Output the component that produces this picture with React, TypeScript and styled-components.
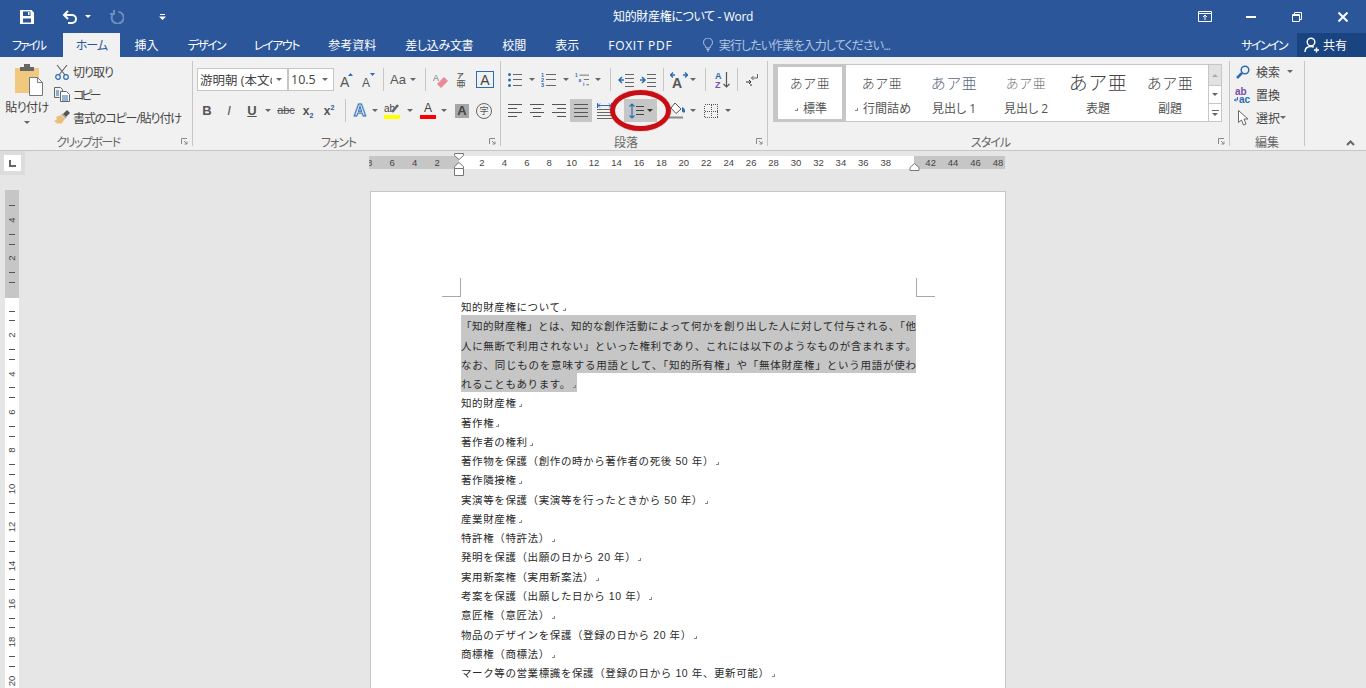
import React from 'react';
import styled, { createGlobalStyle } from 'styled-components';

const GlobalStyle = createGlobalStyle`
  html, body {
    margin: 0;
    padding: 0;
    background: #e6e6e6;
  }
  * {
    box-sizing: border-box;
  }
`;

const uiFont = `"Open Sans", "Noto Sans CJK JP", sans-serif`;
const docFont = `"Liberation Sans", "Noto Sans CJK JP", sans-serif`;

const Root = styled.div`
  width: 1366px;
  height: 688px;
  overflow: hidden;
  display: flex;
  flex-direction: column;
  font-family: ${uiFont};
  font-feature-settings: 'palt';
  color: #444;
`;

/* title bar */
const TitleBar = styled.div`
  height: 33px;
  flex: none;
  background: #2b579a;
  display: grid;
  grid-template-columns: 1fr auto 1fr;
  align-items: center;
`;

const Qat = styled.div`
  display: flex;
  align-items: center;
  padding-left: 8px;
`;

const QatBtn = styled.div<{ $w: number; $ml?: number }>`
  width: ${(p) => p.$w}px;
  margin-left: ${(p) => p.$ml ?? 0}px;
  display: flex;
  justify-content: center;
  align-items: center;
`;

const TitleText = styled.div`
  color: #fff;
  font-size: 12px;
  letter-spacing: -0.35px;
  margin-top: -1px;
`;

const WinControls = styled.div`
  display: flex;
  justify-content: flex-end;
`;

const WinBtn = styled.div`
  width: 46px;
  height: 32px;
  display: flex;
  justify-content: center;
  align-items: center;
`;

/* tabs */
const TabRow = styled.div`
  height: 24px;
  flex: none;
  background: #2b579a;
  display: flex;
  align-items: stretch;
  font-size: 12px;
  color: #fff;
`;

const Tab = styled.div<{ $active?: boolean; $ls?: number }>`
  padding: 0 ${(p) => (p.$active ? 13 : 14.5)}px;
  margin-left: ${(p) => (p.$active ? 3.5 : 0)}px;
  display: flex;
  align-items: center;
  letter-spacing: ${(p) => p.$ls ?? 0}px;
  background: ${(p) => (p.$active ? '#f1f1f1' : 'transparent')};
  color: ${(p) => (p.$active ? '#2b579a' : '#fff')};
  &:first-child {
    margin-left: -2.5px;
  }
`;

const TellMe = styled.div`
  display: flex;
  align-items: center;
  gap: 6px;
  margin-left: 16px;
  letter-spacing: -0.9px;
  color: #b3c5e0;
`;

const TabSpacer = styled.div`
  flex: 1;
`;

const SignIn = styled.div`
  display: flex;
  align-items: center;
  margin-right: 10px;
  letter-spacing: -1.6px;
`;

const ShareBox = styled.div`
  width: 69px;
  background: #1a4480;
  display: flex;
  align-items: center;
  gap: 3px;
  padding-left: 7px;
`;

/* ribbon */
const Ribbon = styled.div`
  height: 94px;
  flex: none;
  background: #f1f1f1;
  border-bottom: 1px solid #c6c6c6;
  display: flex;
  align-items: flex-start;
  padding-top: 4px;
`;

const Group = styled.div<{ $w: number }>`
  position: relative;
  width: ${(p) => p.$w}px;
  height: 85px;
  flex: none;
  border-right: 1px solid #c6c6c6;
  display: flex;
  flex-direction: column;
`;

const GroupBody = styled.div`
  flex: 1;
  min-height: 0;
`;

const GroupLabel = styled.div<{ $ls?: number; $plain?: boolean }>`
  height: 16px;
  margin-bottom: -5px;
  padding-right: ${(p) => (p.$plain ? 0 : 16)}px;
  text-align: center;
  font-size: 12px;
  line-height: 16px;
  letter-spacing: ${(p) => p.$ls ?? 0}px;
  color: #666;
`;

const Launcher = styled.svg`
  position: absolute;
  right: 4px;
  bottom: 1px;
`;

const ToolRow = styled.div<{ $ml?: number; $mt?: number }>`
  display: flex;
  align-items: center;
  height: 23px;
  margin-left: ${(p) => p.$ml ?? 0}px;
  margin-top: ${(p) => p.$mt ?? 0}px;
`;

const Btn = styled.div<{ $w: number; $on?: boolean; $ml?: number }>`
  width: ${(p) => p.$w}px;
  height: 23px;
  flex: none;
  margin-left: ${(p) => p.$ml ?? 0}px;
  display: flex;
  justify-content: center;
  align-items: center;
  background: ${(p) => (p.$on ? '#c6c6c6' : 'transparent')};
`;

const Caret = styled.span<{ $color?: string }>`
  width: 0;
  height: 0;
  border-left: 3px solid transparent;
  border-right: 3px solid transparent;
  border-top: 3px solid ${(p) => p.$color ?? '#666'};
`;

const Sep = styled.div<{ $l: number; $r: number }>`
  width: 1px;
  height: 23px;
  flex: none;
  background: #c6c6c6;
  margin: 0 ${(p) => p.$r}px 0 ${(p) => p.$l}px;
`;

const Glyph = styled.span<{ $size?: number; $bold?: boolean; $italic?: boolean; $under?: boolean; $strike?: boolean }>`
  font-family: 'Liberation Sans', sans-serif;
  font-size: ${(p) => p.$size ?? 13}px;
  font-weight: ${(p) => (p.$bold ? 700 : 400)};
  font-style: ${(p) => (p.$italic ? 'italic' : 'normal')};
  text-decoration: ${(p) => (p.$under ? 'underline' : p.$strike ? 'line-through' : 'none')};
  color: #555;
  line-height: 1;
  sub, sup {
    font-size: 7px;
    color: #2b579a;
    line-height: 0;
  }
`;

const OutlineA = styled(Glyph)`
  color: #fff;
  -webkit-text-stroke: 1px #2b6cb5;
  font-weight: 700;
  font-size: 17px;
  text-shadow: 0 0 2px #9cc3ea;
`;

const BoxedA = styled(Glyph)`
  width: 18px;
  height: 17px;
  border: 1px solid #2b6cb5;
  display: flex;
  align-items: center;
  justify-content: center;
  color: #444;
`;

const ShadedA = styled(Glyph)`
  width: 14px;
  height: 14px;
  background: #a6a6a6;
  display: flex;
  align-items: center;
  justify-content: center;
  color: #444;
  font-weight: 700;
`;

const CircledChar = styled.span`
  width: 16px;
  height: 16px;
  border: 1px solid #666;
  border-radius: 50%;
  font-size: 9px;
  display: flex;
  align-items: center;
  justify-content: center;
  color: #555;
`;

const BarGlyph = styled.span<{ $bar: string }>`
  width: 16px;
  display: flex;
  flex-direction: column;
  align-items: center;
  font-family: 'Liberation Sans', sans-serif;
  font-size: 12px;
  line-height: 13px;
  color: #444;
  border-bottom: 4px solid ${(p) => p.$bar};
`;

const SelectBox = styled.div<{ $w: number }>`
  width: ${(p) => p.$w}px;
  height: 23px;
  flex: none;
  background: #fff;
  border: 1px solid #c6c6c6;
  display: flex;
  align-items: center;
  font-size: 12.5px;
  color: #444;
  padding: 0 5px 0 2px;
`;

const SelectText = styled.span`
  flex: 1;
  min-width: 0;
  overflow: hidden;
  white-space: nowrap;
  margin-right: 4px;
`;

/* clipboard */
const ClipLayout = styled.div`
  display: flex;
`;

const PasteCol = styled.div`
  width: 50px;
  margin: 3px 2px 0 2px;
  display: flex;
  flex-direction: column;
  align-items: center;
  font-size: 12px;
  line-height: 16px;
  letter-spacing: -0.5px;
  svg {
    margin: 0 0 4px 4px;
  }
`;

const PasteCaret = styled(Caret)`
  margin-top: 5px;
`;

const CmdList = styled.div`
  margin-top: -1px;
`;

const CmdRow = styled.div<{ $ls?: number }>`
  display: flex;
  align-items: center;
  height: 23px;
  font-size: 12px;
  letter-spacing: ${(p) => p.$ls ?? 0}px;
  white-space: nowrap;
`;

const CmdIcon = styled.span<{ $w: number; $mr?: number }>`
  width: ${(p) => p.$w}px;
  margin-right: ${(p) => p.$mr ?? 0}px;
  flex: none;
  display: flex;
  justify-content: center;
`;

const CmdCaret = styled(Caret)`
  margin-left: 7px;
`;

/* styles gallery */
const Gallery = styled.div`
  width: 449px;
  height: 58px;
  margin: 3px 0 0 5px;
  background: #fff;
  border: 1px solid #c6c6c6;
  display: flex;
`;

const StyleItem = styled.div<{ $selected?: boolean }>`
  width: 72px;
  height: 100%;
  flex: none;
  display: flex;
  flex-direction: column;
  align-items: center;
  border: ${(p) => (p.$selected ? '4px solid #c6c6c6' : '4px solid transparent')};
  border-top-width: 2px;
  border-bottom-width: 2px;
`;

const StylePreview = styled.div<{ $size: number; $color: string }>`
  height: 32px;
  display: flex;
  align-items: center;
  font-size: ${(p) => p.$size}px;
  color: ${(p) => p.$color};
  letter-spacing: 0.5px;
  white-space: nowrap;
  font-feature-settings: normal;
  font-weight: 300;
`;

const StyleName = styled.div`
  font-size: 12px;
  line-height: 20px;
  margin-top: 2px;
  color: #555;
  white-space: nowrap;
  display: flex;
  align-items: center;
  gap: 4px;
`;

const ScrollCol = styled.div`
  width: 14px;
  margin-left: 2px;
  border-left: 1px solid #c6c6c6;
  display: flex;
  flex-direction: column;
`;

const ScrollBtn = styled.div<{ $h: number; $off?: boolean }>`
  height: ${(p) => p.$h}px;
  background: ${(p) => (p.$off ? '#e2e2e2' : '#fff')};
  border-bottom: 1px solid #c6c6c6;
  display: flex;
  align-items: center;
  justify-content: center;
  &:last-child {
    border-bottom: 0;
  }
`;

const UpCaret = styled.span`
  width: 0;
  height: 0;
  border-left: 3px solid transparent;
  border-right: 3px solid transparent;
  border-bottom: 3px solid #aaa;
`;

const MoreCaret = styled.span`
  width: 7px;
  border-top: 1px solid #666;
  padding-top: 2px;
  display: flex;
  justify-content: center;
`;

const Collapse = styled.div`
  flex: 1;
  height: 85px;
  display: flex;
  justify-content: flex-end;
  align-items: flex-end;
  padding: 0 11px 0 0;
`;

/* workspace */
const Workspace = styled.div`
  flex: 1;
  min-height: 0;
  display: flex;
  background: #e6e6e6;
`;

const LeftRail = styled.div`
  width: 25px;
  flex: none;
`;

const TabStop = styled.div`
  width: 25px;
  height: 24px;
  background: #dcdcdc;
  padding: 4px;
`;

const TabStopInner = styled.div`
  width: 17px;
  height: 16px;
  background: #fff;
  display: flex;
  align-items: center;
  justify-content: center;
`;

const VRuler = styled.div`
  width: 14px;
  height: 500px;
  margin: 15px 0 0 5px;
  padding-top: 10.8px;
  background: linear-gradient(#c6c6c6 108px, #fff 108px);
  overflow: hidden;
`;

const VCell = styled.div`
  height: 38.4px;
  display: flex;
  flex-direction: column;
  justify-content: space-around;
  align-items: center;
`;

const VTick = styled.div`
  width: 6px;
  height: 1px;
  background: #555;
`;

const VNum = styled.div`
  height: 10px;
  line-height: 10px;
  font-family: 'Liberation Sans', sans-serif;
  font-size: 9.5px;
  color: #444;
  transform: rotate(-90deg);
`;

const Main = styled.div`
  flex: 1;
  min-width: 0;
  padding: 5px 0 0 344px;
`;

const HRulerWrap = styled.div`
  position: relative;
  width: 636px;
`;

const HRuler = styled.div`
  width: 636px;
  height: 13px;
  background: linear-gradient(to right, #c6c6c6 90px, #fff 90px, #fff 545px, #c6c6c6 545px);
  display: flex;
  overflow: hidden;
`;

const HCells = styled.div`
  display: flex;
  flex: none;
  margin-left: -10.5px;
`;

const HCell = styled.div`
  width: 22.45px;
  flex: none;
  text-align: center;
  font-family: 'Liberation Sans', sans-serif;
  font-size: 9.5px;
  line-height: 13px;
  color: #444;
`;

const IndentMarker = styled.svg`
  position: absolute;
  left: 85px;
  top: -3px;
`;

const RightMarker = styled.svg`
  position: absolute;
  left: 540px;
  top: 7px;
`;

const Page = styled.div`
  position: relative;
  width: 636px;
  height: 520px;
  margin: 22px 0 0 1px;
  background: #fff;
  border: 1px solid #c6c6c6;
  padding: 104px 0 0 90px;
`;

const CropMark = styled.div<{ $right?: boolean }>`
  position: absolute;
  top: 86px;
  left: ${(p) => (p.$right ? '545px' : '71px')};
  width: 19px;
  height: 19px;
  border-bottom: 1px solid #a8a8a8;
  border-right: ${(p) => (p.$right ? '0' : '1px solid #a8a8a8')};
  border-left: ${(p) => (p.$right ? '1px solid #a8a8a8' : '0')};
`;

const DocLine = styled.div<{ $selected?: boolean; $fill?: boolean }>`
  width: ${(p) => (p.$fill ? '455px' : 'fit-content')};
  height: 19.27px;
  padding-top: 3px;
  line-height: 16.27px;
  font-family: ${docFont};
  font-feature-settings: normal;
  font-size: 10.5px;
  letter-spacing: ${(p) => (p.$fill ? '0' : '0.6px')};
  color: #2a2a2a;
  white-space: nowrap;
  background: ${(p) => (p.$selected ? '#c6c6c6' : 'transparent')};
  text-align: ${(p) => (p.$fill ? 'justify' : 'left')};
  text-align-last: ${(p) => (p.$fill ? 'justify' : 'auto')};
  text-justify: inter-character;
`;

const ParaMark = styled.span`
  display: inline-block;
  width: 3px;
  height: 3px;
  margin: 0 1px 0 2px;
  border-right: 1px solid #888;
  border-bottom: 1px solid #888;
`;

/* red annotation, sits over the line spacing button */
const SpacingBtn = styled(Btn)`
  position: relative;
  gap: 3px;
`;

const RedRing = styled.div`
  position: absolute;
  left: -14px;
  top: -9px;
  width: 61px;
  height: 41px;
  border: 5px solid #c80d14;
  border-radius: 50%;
  box-shadow: 0 0 1px #c80d14;
`;

/* icons */
const Ico = ({ w = 16, h = 16, stroke = '#666', children }: { w?: number; h?: number; stroke?: string; children: React.ReactNode }) => (
  <svg width={w} height={h} viewBox={`0 0 ${w} ${h}`} fill="none" stroke={stroke} strokeWidth="1">
    {children}
  </svg>
);

const SaveIcon = () => (
  <Ico w={14} h={14} stroke="none">
    <path fillRule="evenodd" fill="#fff" d="M0 0h11.5L14 2.5V14H0zM3 1.5V6h7.5V1.5zM3 8.5V12.500h8V8.500z" />
    <path fill="#fff" d="M8 2h1.500v3H8z" />
  </Ico>
);

const UndoIcon = () => (
  <Ico w={16} h={14} stroke="#fff">
    <path strokeWidth="2" d="M6 1 2 5l4 4M2 5h8a4 4 0 0 1 0 8H6" />
  </Ico>
);

const RedoIcon = () => (
  <Ico w={14} h={14} stroke="#6f8ebc">
    <path strokeWidth="2" d="M4.500 2.500a6 6 0 1 0 4-.8M4 0v4h-4" />
  </Ico>
);

const CustomizeIcon = () => (
  <Ico w={7} h={6} stroke="none">
    <path fill="#fff" d="M1 0h5v1H1zM0 2.500h7L3.500 6z" />
  </Ico>
);

const DisplayIcon = () => (
  <Ico w={14} h={11} stroke="#fff">
    <path d="M.5.500h13v10H.500zM.5 2.500h13M7 9V4M5 6l2-2 2 2" />
  </Ico>
);

const MinIcon = () => (
  <Ico w={10} h={4} stroke="#fff">
    <path strokeWidth="2" d="M0 2h10" />
  </Ico>
);

const RestoreIcon = () => (
  <Ico w={10} h={10} stroke="#fff">
    <path d="M.500 2.500h7v7h-7zM2.500 2.500v-2h7v7h-2" />
    <path d="M.500 3.500h7" />
  </Ico>
);

const CloseIcon = () => (
  <Ico w={10} h={10} stroke="#fff">
    <path strokeWidth="2" d="M.5.500l9 9M9.500.500l-9 9" />
  </Ico>
);

const BulbIcon = () => (
  <Ico w={10} h={14} stroke="#b3c5e0">
    <path d="M3 10c0-2-2.500-3-2.500-5.500a4.500 4.500 0 0 1 9 0C9.500 7 7 8 7 10zM3.500 11.500h3M4 13h2" />
  </Ico>
);

const UserIcon = () => (
  <Ico w={16} h={16} stroke="#fff">
    <circle cx="7" cy="5" r="3.800" strokeWidth="1.400" />
    <path strokeWidth="1.400" d="M1 15c0-3.500 2.500-5.500 6-5.500 1 0 2 .2 2.800.6M12.500 10.500v5M10 13h5" />
  </Ico>
);

const PasteIcon = () => (
  <Ico w={30} h={32} stroke="none">
    <path fill="#f0c97f" d="M1 4h24v25H1z" />
    <path fill="#666" d="M6 3h4V0h6v3h4v4H6z" />
    <path fill="#fff" stroke="#777" d="M15.500 13.500h8l5 5v13h-13z" />
    <path stroke="#777" d="M23.500 13.500v5h5" />
  </Ico>
);

const ScissorsIcon = () => (
  <Ico w={14} h={16} stroke="#666">
    <path d="M2 1l8 10M12 1 4 11" strokeWidth="1.200" />
    <circle cx="3" cy="13" r="2.300" stroke="#2b6cb5" strokeWidth="1.200" />
    <circle cx="11" cy="13" r="2.300" stroke="#2b6cb5" strokeWidth="1.200" />
  </Ico>
);

const CopyIcon = () => (
  <Ico w={16} h={15} stroke="#666">
    <path d="M.5.500h6l2 2v2M.5.500v10h5" />
    <path fill="#fff" d="M6.500 4.500h6l3 3v7h-9z" />
    <path stroke="#2b6cb5" d="M2 4h3M2 6h3M2 8h3M8 9h6M8 11h6M8 13h6" />
  </Ico>
);

const BrushIcon = () => (
  <Ico w={16} h={15} stroke="none">
    <path fill="#555" d="M9 4l4-4 3 3-4 4z" />
    <path fill="#999" d="M7.500 4.500 8.500 3.500l4 4-1 1z" />
    <path fill="#e9bf7a" d="M7 5l4 4-4 5-2-1-1 1-4-3 2-1 1-1-1-2z" />
  </Ico>
);

const GrowA = ({ up }: { up: boolean }) => (
  <Ico w={14} h={16} stroke="none">
    <text x="0" y="15" fontFamily="Liberation Sans" fontSize={up ? 14 : 12} fill="#555">A</text>
    <path fill="#2b6cb5" d={up ? 'M8 4h5l-2.500-3z' : 'M8 1h5l-2.500 3z'} />
  </Ico>
);

const EraserIcon = () => (
  <Ico w={16} h={16} stroke="none">
    <text x="0" y="9" fontFamily="Liberation Sans" fontSize="9" fill="#777">A</text>
    <path fill="#e9899a" d="M4 12l7-7 4 4-7 7z" />
  </Ico>
);

const RubyIcon = () => (
  <Ico w={12} h={16} stroke="none">
    <text x="1" y="6" fontFamily="Noto Sans CJK JP" fontSize="7" fontWeight="700" fill="#555">ア</text>
    <text x="0" y="16" fontFamily="Noto Sans CJK JP" fontSize="10" fill="#555">亜</text>
  </Ico>
);

const HighlightIcon = () => (
  <Ico w={16} h={17} stroke="none">
    <text x="0" y="10" fontFamily="Liberation Sans" fontSize="10" fill="#444">ab</text>
    <path stroke="#666" strokeWidth="2.500" d="M8 10l6-7" />
    <path fill="#ffff00" d="M0 13h16v4H0z" />
  </Ico>
);

const ListLines = ({ x, ys, to = 14 }: { x: number; ys: number[]; to?: number }) => (
  <path stroke="#666" d={ys.map((y) => `M${x} ${y + 0.5}H${to}`).join('')} />
);

const BulletIcon = () => (
  <Ico w={14} h={14}>
    <circle cx="1.500" cy="1.500" r="1.500" fill="#2b6cb5" stroke="none" />
    <circle cx="1.500" cy="7" r="1.500" fill="#2b6cb5" stroke="none" />
    <circle cx="1.500" cy="12.500" r="1.500" fill="#2b6cb5" stroke="none" />
    <ListLines x={5} ys={[1, 6, 12]} />
  </Ico>
);

const NumberIcon = () => (
  <Ico w={15} h={15}>
    <text x="0" y="5" fontFamily="Liberation Sans" fontSize="5.500" fontWeight="700" fill="#2b6cb5" stroke="none">1</text>
    <text x="0" y="10" fontFamily="Liberation Sans" fontSize="5.500" fontWeight="700" fill="#2b6cb5" stroke="none">2</text>
    <text x="0" y="15" fontFamily="Liberation Sans" fontSize="5.500" fontWeight="700" fill="#2b6cb5" stroke="none">3</text>
    <ListLines x={5} ys={[2, 7, 13]} to={15} />
  </Ico>
);

const MultiIcon = () => (
  <Ico w={16} h={15}>
    <text x="0" y="5" fontFamily="Liberation Sans" fontSize="5.500" fontWeight="700" fill="#2b6cb5" stroke="none">1</text>
    <text x="4" y="10" fontFamily="Liberation Sans" fontSize="5.500" fontWeight="700" fill="#2b6cb5" stroke="none">a</text>
    <text x="9" y="15" fontFamily="Liberation Sans" fontSize="5.500" fontWeight="700" fill="#2b6cb5" stroke="none">i</text>
    <path stroke="#666" d="M5 2.500h11M10 7.500h6M13 13.500h3" />
  </Ico>
);

const IndentIcon = ({ dir }: { dir: 'in' | 'out' }) => (
  <Ico w={16} h={14}>
    <ListLines x={7} ys={[1, 5, 9, 13]} to={16} />
    <path stroke="#2b6cb5" strokeWidth="1.500" d={dir === 'out' ? 'M6 7H1.500M4 4 1 7l3 3' : 'M0 7h4.500M2 4l3 3-3 3'} />
  </Ico>
);

const AsianIcon = () => (
  <Ico w={18} h={16}>
    <text x="2" y="16" fontFamily="Liberation Sans" fontSize="14" fontWeight="700" fill="#555" stroke="none">A</text>
    <path stroke="#2b6cb5" strokeWidth="1.300" d="M0 3h5M3 .5 .5 3 3 5.500M18 3h-5M15 .5 17.500 3 15 5.500" />
  </Ico>
);

const SortIcon = () => (
  <Ico w={15} h={17} stroke="none">
    <text x="0" y="8" fontFamily="Liberation Sans" fontSize="9" fontWeight="700" fill="#2b6cb5">A</text>
    <text x="0" y="17" fontFamily="Liberation Sans" fontSize="9" fontWeight="700" fill="#7a4ea8">Z</text>
    <path stroke="#555" strokeWidth="1.200" d="M11.500 1v15M8.500 13l3 3 3-3" />
  </Ico>
);

const MarksIcon = () => (
  <Ico w={12} h={13}>
    <path d="M11.500 1v4h-6M7.500 3l-2 2 2 2" />
    <path stroke="#333" d="M0 9h5M3 7l2 2-2 2M4 12h2" />
  </Ico>
);

const AlignIcon = ({ kind }: { kind: 'left' | 'center' | 'right' | 'full' }) => {
  const d = {
    left: 'M0 .5h14M0 4.500h9M0 8.500h14M0 12.500h9',
    center: 'M0 .5h14M3 4.500h8M0 8.500h14M3 12.500h8',
    right: 'M0 .5h14M5 4.500h9M0 8.500h14M5 12.500h9',
    full: 'M0 .5h14M0 4.500h14M0 8.500h14M0 12.500h14',
  }[kind];
  return (
    <Ico w={14} h={13}>
      <path stroke="#555" d={d} />
    </Ico>
  );
};

const DistIcon = () => (
  <Ico w={15} h={16}>
    <path stroke="#2b6cb5" d="M.5 0v5M14.500 0v5M1 2.500h13M3 .5 1 2.500l2 2M12 .5l2 2-2 2" />
    <ListLines x={0} ys={[6, 9, 12, 15]} to={15} />
  </Ico>
);

const SpacingIcon = () => (
  <Ico w={15} h={16}>
    <path stroke="#2b6cb5" strokeWidth="1.200" d="M3 1v14M.5 3.500 3 1l2.500 2.500M.5 12.500 3 15l2.500-2.500" />
    <path stroke="#444" d="M7 3.500h8M7 7.500h8M7 11.500h8" />
  </Ico>
);

const ShadingIcon = () => (
  <Ico w={17} h={17}>
    <path fill="#fff" stroke="#555" d="M6 1l6 6-5 4.500L2 6z" />
    <path fill="#2b6cb5" stroke="none" d="M13 5c2 1 3.500 2.500 3 5-1 1-3 .5-3-1z" />
    <path stroke="#888" strokeWidth="2" d="M0 15.500h14" />
  </Ico>
);

const BorderIcon = () => (
  <svg width="14" height="14" viewBox="0 0 14 14" fill="none" shapeRendering="crispEdges">
    <path stroke="#555" strokeDasharray="1 1" d="M.5.500h13v13H.5zM.5 7h13M7 .5v13" />
  </svg>
);

const LauncherIcon = () => (
  <Launcher width="7" height="7" viewBox="0 0 7 7" fill="none" stroke="#888">
    <path d="M.5 6V.5H6M3 3l3 3M6 3.500V6H3.500" />
  </Launcher>
);

const SearchIcon = () => (
  <Ico w={14} h={14} stroke="#2b6cb5">
    <circle cx="9" cy="5" r="3.800" strokeWidth="1.500" />
    <path strokeWidth="2.500" d="M6 8 1 13" />
  </Ico>
);

const ReplaceIcon = () => (
  <Ico w={18} h={16} stroke="none">
    <text x="1" y="8" fontFamily="Liberation Sans" fontSize="10" fontWeight="700" fill="#7a4ea8">ab</text>
    <text x="5" y="16" fontFamily="Liberation Sans" fontSize="10" fontWeight="700" fill="#2b6cb5">ac</text>
    <path stroke="#2b6cb5" d="M3.500 10v3h-3M2 11.500.5 13 2 14.500" />
  </Ico>
);

const PointerIcon = () => (
  <Ico w={11} h={16} stroke="#666">
    <path fill="#fff" d="M.5.500v12l3-2.500 2 5 2.500-1-2-5h4z" />
  </Ico>
);

const ChevronUp = () => (
  <Ico w={9} h={6} stroke="#666">
    <path strokeWidth="2" d="M1 5l3.500-3.500L8 5" />
  </Ico>
);

const TabStopIcon = () => (
  <Ico w={7} h={7} stroke="#666">
    <path strokeWidth="2" d="M1 0v6h6" />
  </Ico>
);

const tabs = [
  { name: '挿入' },
  { name: 'デザイン', ls: -1.7 },
  { name: 'レイアウト', ls: -1.4 },
  { name: '参考資料' },
  { name: '差し込み文書', ls: -0.3 },
  { name: '校閲' },
  { name: '表示' },
  { name: 'FOXIT PDF', ls: 0.7 },
];
const rulerNums = [8, 6, 4, 2, 0, 2, 4, 6, 8, 10, 12, 14, 16, 18, 20, 22, 24, 26, 28, 30, 32, 34, 36, 38, 0, 42, 44, 46, 48];
const vRulerNums = [4, 2, 0, 2, 4, 6, 8, 10, 12, 14, 16, 18, 20];

const styleItems = [
  { name: '標準', size: 13, color: '#444', mark: true },
  { name: '行間詰め', size: 13, color: '#444', mark: true },
  { name: '見出し 1', size: 15, color: '#5a6a80' },
  { name: '見出し 2', size: 13, color: '#777' },
  { name: '表題', size: 19, color: '#444' },
  { name: '副題', size: 15, color: '#444' },
];

const selectedLines = [
  '「知的財産権」とは、知的な創作活動によって何かを創り出した人に対して付与される、「他',
  '人に無断で利用されない」といった権利であり、これには以下のようなものが含まれます。',
  'なお、同じものを意味する用語として、「知的所有権」や「無体財産権」という用語が使わ',
];

const bodyLines = [
  '知的財産権',
  '著作権',
  '著作者の権利',
  '著作物を保護（創作の時から著作者の死後 50 年）',
  '著作隣接権',
  '実演等を保護（実演等を行ったときから 50 年）',
  '産業財産権',
  '特許権（特許法）',
  '発明を保護（出願の日から 20 年）',
  '実用新案権（実用新案法）',
  '考案を保護（出願した日から 10 年）',
  '意匠権（意匠法）',
  '物品のデザインを保護（登録の日から 20 年）',
  '商標権（商標法）',
  'マーク等の営業標識を保護（登録の日から 10 年、更新可能）',
];

const App = () => (
  <Root>
    <GlobalStyle />
    <TitleBar>
      <Qat>
        <QatBtn $w={38}><SaveIcon /></QatBtn>
        <QatBtn $w={30} $ml={9}><UndoIcon /></QatBtn>
        <QatBtn $w={6}><Caret $color="#fff" /></QatBtn>
        <QatBtn $w={26} $ml={13}><RedoIcon /></QatBtn>
        <QatBtn $w={16} $ml={24}><CustomizeIcon /></QatBtn>
      </Qat>
      <TitleText>知的財産権について - Word</TitleText>
      <WinControls>
        <WinBtn><DisplayIcon /></WinBtn>
        <WinBtn><MinIcon /></WinBtn>
        <WinBtn><RestoreIcon /></WinBtn>
        <WinBtn><CloseIcon /></WinBtn>
      </WinControls>
    </TitleBar>

    <TabRow>
      <Tab $ls={-2.2}>ファイル</Tab>
      <Tab $active $ls={-1}>ホーム</Tab>
      {tabs.map((t) => (
        <Tab key={t.name} $ls={t.ls}>{t.name}</Tab>
      ))}
      <TellMe>
        <BulbIcon />
        実行したい作業を入力してください...
      </TellMe>
      <TabSpacer />
      <SignIn>サインイン</SignIn>
      <ShareBox>
        <UserIcon />
        共有
      </ShareBox>
    </TabRow>

    <Ribbon>
      <Group $w={193}>
        <GroupBody>
          <ClipLayout>
            <PasteCol>
              <PasteIcon />
              貼り付け
              <PasteCaret />
            </PasteCol>
            <CmdList>
              <CmdRow $ls={-1}><CmdIcon $w={16} $mr={3}><ScissorsIcon /></CmdIcon>切り取り</CmdRow>
              <CmdRow $ls={-3}><CmdIcon $w={16} $mr={3}><CopyIcon /></CmdIcon>コピー</CmdRow>
              <CmdRow $ls={-1.1}><CmdIcon $w={16} $mr={3}><BrushIcon /></CmdIcon>書式のコピー/貼り付け</CmdRow>
            </CmdList>
          </ClipLayout>
        </GroupBody>
        <GroupLabel $ls={-1.5}>クリップボード</GroupLabel>
        <LauncherIcon />
      </Group>

      <Group $w={308}>
        <GroupBody>
          <ToolRow $ml={4} $mt={7}>
            <SelectBox $w={91}>
              <SelectText>游明朝 (本文の</SelectText>
              <Caret />
            </SelectBox>
            <SelectBox $w={46}>
              <SelectText>10.5</SelectText>
              <Caret />
            </SelectBox>
            <Btn $w={22} $ml={2}><GrowA up /></Btn>
            <Btn $w={22}><GrowA up={false} /></Btn>
            <Sep $l={3} $r={3} />
            <Btn $w={22}><Glyph $size={13}>Aa</Glyph></Btn>
            <Btn $w={8}><Caret /></Btn>
            <Sep $l={8} $r={5} />
            <Btn $w={20}><EraserIcon /></Btn>
            <Btn $w={22}><RubyIcon /></Btn>
            <Btn $w={24}><BoxedA $size={14}>A</BoxedA></Btn>
          </ToolRow>
          <ToolRow $ml={4} $mt={8}>
            <Btn $w={20}><Glyph $bold>B</Glyph></Btn>
            <Btn $w={24}><Glyph $italic>I</Glyph></Btn>
            <Btn $w={22}><Glyph $bold $under>U</Glyph></Btn>
            <Btn $w={10}><Caret /></Btn>
            <Btn $w={26}><Glyph $size={11} $strike>abc</Glyph></Btn>
            <Btn $w={18}><Glyph $size={12} $bold>x<sub>2</sub></Glyph></Btn>
            <Btn $w={24}><Glyph $size={12} $bold>x<sup>2</sup></Glyph></Btn>
            <Sep $l={4} $r={4} />
            <Btn $w={20}><OutlineA>A</OutlineA></Btn>
            <Btn $w={10}><Caret /></Btn>
            <Btn $w={24}><HighlightIcon /></Btn>
            <Btn $w={12}><Caret /></Btn>
            <Btn $w={24}><BarGlyph $bar="#ff0000">A</BarGlyph></Btn>
            <Btn $w={8}><Caret /></Btn>
            <Btn $w={28}><ShadedA>A</ShadedA></Btn>
            <Btn $w={16}><CircledChar>字</CircledChar></Btn>
          </ToolRow>
        </GroupBody>
        <GroupLabel $ls={-1}>フォント</GroupLabel>
        <LauncherIcon />
      </Group>

      <Group $w={267}>
        <GroupBody>
          <ToolRow $ml={4} $mt={7}>
            <Btn $w={20}><BulletIcon /></Btn>
            <Btn $w={14}><Caret /></Btn>
            <Btn $w={18}><NumberIcon /></Btn>
            <Btn $w={18}><Caret /></Btn>
            <Btn $w={14}><MultiIcon /></Btn>
            <Btn $w={18}><Caret /></Btn>
            <Sep $l={3} $r={4} />
            <Btn $w={22}><IndentIcon dir="out" /></Btn>
            <Btn $w={22}><IndentIcon dir="in" /></Btn>
            <Sep $l={4} $r={4} />
            <Btn $w={22}><AsianIcon /></Btn>
            <Btn $w={6}><Caret /></Btn>
            <Sep $l={9} $r={4} />
            <Btn $w={24}><SortIcon /></Btn>
            <Sep $l={3} $r={4} />
            <Btn $w={20}><MarksIcon /></Btn>
          </ToolRow>
          <ToolRow $ml={3} $mt={8}>
            <Btn $w={22}><AlignIcon kind="left" /></Btn>
            <Btn $w={22}><AlignIcon kind="center" /></Btn>
            <Btn $w={22}><AlignIcon kind="right" /></Btn>
            <Btn $w={22} $on><AlignIcon kind="full" /></Btn>
            <Btn $w={24}><DistIcon /></Btn>
            <SpacingBtn $w={33} $ml={8} $on>
              <SpacingIcon />
              <Caret $color="#333" />
              <RedRing />
            </SpacingBtn>
            <Btn $w={20} $ml={10}><ShadingIcon /></Btn>
            <Btn $w={12}><Caret /></Btn>
            <Btn $w={24}><BorderIcon /></Btn>
            <Btn $w={10}><Caret /></Btn>
          </ToolRow>
        </GroupBody>
        <GroupLabel>段落</GroupLabel>
        <LauncherIcon />
      </Group>

      <Group $w={462}>
        <GroupBody>
          <Gallery>
            {styleItems.map((s, i) => (
              <StyleItem key={s.name} $selected={i === 0}>
                <StylePreview $size={s.size} $color={s.color}>あア亜</StylePreview>
                <StyleName>
                  {s.mark && <ParaMark />}
                  {s.name}
                </StyleName>
              </StyleItem>
            ))}
            <ScrollCol>
              <ScrollBtn $h={21} $off><UpCaret /></ScrollBtn>
              <ScrollBtn $h={18}><Caret /></ScrollBtn>
              <ScrollBtn $h={17}><MoreCaret><Caret /></MoreCaret></ScrollBtn>
            </ScrollCol>
          </Gallery>
        </GroupBody>
        <GroupLabel $ls={-1}>スタイル</GroupLabel>
        <LauncherIcon />
      </Group>

      <Group $w={75}>
        <GroupBody>
          <CmdList>
            <CmdRow><CmdIcon $w={26}><SearchIcon /></CmdIcon>検索<CmdCaret /></CmdRow>
            <CmdRow><CmdIcon $w={26}><ReplaceIcon /></CmdIcon>置換</CmdRow>
            <CmdRow><CmdIcon $w={26}><PointerIcon /></CmdIcon>選択<Caret /></CmdRow>
          </CmdList>
        </GroupBody>
        <GroupLabel $plain>編集</GroupLabel>
      </Group>

      <Collapse><ChevronUp /></Collapse>
    </Ribbon>

    <Workspace>
      <LeftRail>
        <TabStop>
          <TabStopInner><TabStopIcon /></TabStopInner>
        </TabStop>
        <VRuler>
          {vRulerNums.map((n, i) => (
            <VCell key={i}>
              <VTick />
              <VNum>{n > 0 ? n : ''}</VNum>
              <VTick />
            </VCell>
          ))}
        </VRuler>
      </LeftRail>

      <Main>
        <HRulerWrap>
          <HRuler>
            <HCells>
              {rulerNums.map((n, i) => (
                <HCell key={i}>{n > 0 ? n : ''}</HCell>
              ))}
            </HCells>
          </HRuler>
          <IndentMarker width="11" height="26" viewBox="0 0 11 26" fill="#fff" stroke="#777">
            <path d="M.5.500h9v2l-4.500 4-4.500-4z" />
            <path d="M5 9.500l4.500 4v2h-9v-2z" />
            <path d="M.5 15.500h9v7h-9z" />
          </IndentMarker>
          <RightMarker width="11" height="8" viewBox="0 0 11 8" fill="#fff" stroke="#777">
            <path d="M5.500.500l4.500 4v3H1v-3z" />
          </RightMarker>
        </HRulerWrap>

        <Page>
          <CropMark />
          <CropMark $right />
          <DocLine>知的財産権について<ParaMark /></DocLine>
          {selectedLines.map((l) => (
            <DocLine key={l} $selected $fill>{l}</DocLine>
          ))}
          <DocLine $selected>れることもあります。<ParaMark /></DocLine>
          {bodyLines.map((l) => (
            <DocLine key={l}>{l}<ParaMark /></DocLine>
          ))}
        </Page>
      </Main>
    </Workspace>
  </Root>
);

export default App;
